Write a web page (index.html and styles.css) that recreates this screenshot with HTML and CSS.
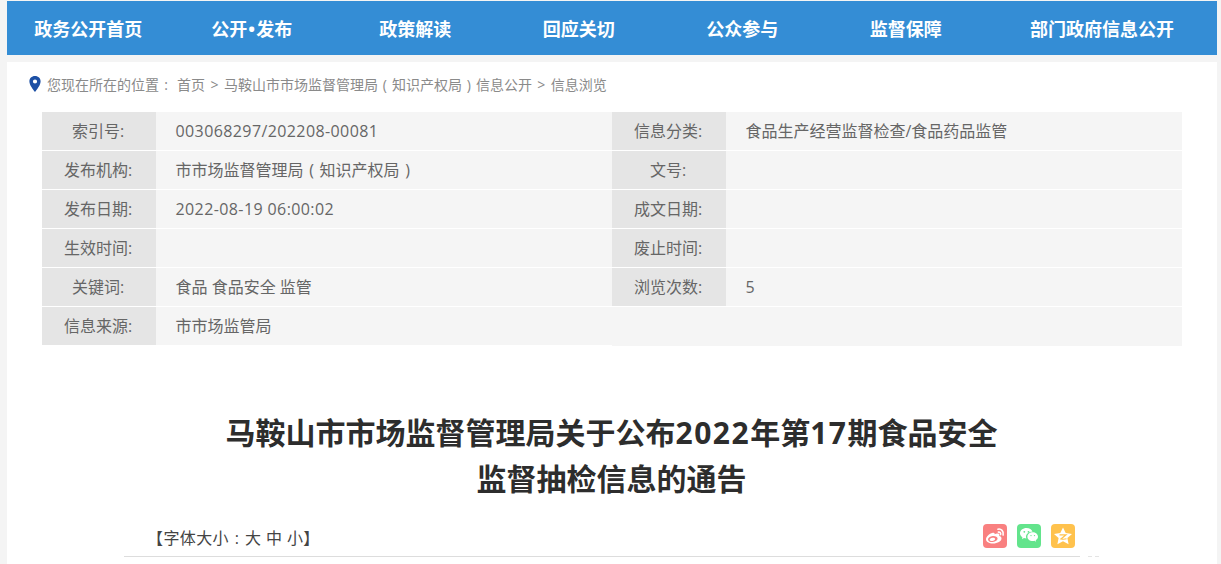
FILE: index.html
```html
<!DOCTYPE html>
<html lang="zh-CN">
<head>
<meta charset="utf-8">
<title>信息浏览</title>
<link rel="stylesheet" href="styles.css">
</head>
<body>
<nav class="nav">
  <a>政务公开首页</a><a>公开<span class="sep">•</span>发布</a><a>政策解读</a><a>回应关切</a><a>公众参与</a><a>监督保障</a><a>部门政府信息公开</a>
</nav>
<main class="page">
  <div class="crumbs">
    <svg class="pin" viewBox="0 0 12 16" width="12" height="16"><path fill="#1d50a5" fill-rule="evenodd" d="M6 0C2.700 0 .4 2.400.4 5.400.4 9 4 13 6 16c2-3 5.600-7 5.600-10.600C11.600 2.400 9.300 0 6 0zm0 3.400a2.100 2.100 0 1 1 0 4.200 2.100 2.100 0 0 1 0-4.200z"/></svg>
    <span>您现在所在的位置<span class="fw">:</span></span>
    <span class="path">首页 &gt; 马鞍山市市场监督管理局<span class="fw">(</span>知识产权局<span class="fw">)</span>信息公开 &gt; 信息浏览</span>
  </div>
  <div class="meta">
    <div class="k">索引号:</div><div class="v num">003068297/202208-00081</div>
    <div class="k">信息分类:</div><div class="v">食品生产经营监督检查/食品药品监管</div>
    <div class="k">发布机构:</div><div class="v">市市场监督管理局<span class="fw">(</span>知识产权局<span class="fw">)</span></div>
    <div class="k">文号:</div><div class="v"></div>
    <div class="k">发布日期:</div><div class="v num">2022-08-19 06:00:02</div>
    <div class="k">成文日期:</div><div class="v"></div>
    <div class="k">生效时间:</div><div class="v"></div>
    <div class="k">废止时间:</div><div class="v"></div>
    <div class="k">关键词:</div><div class="v">食品 食品安全 监管</div>
    <div class="k">浏览次数:</div><div class="v">5</div>
    <div class="k">信息来源:</div><div class="v">市市场监管局</div>
    <div class="v tail"></div>
  </div>
  <h1 class="title">马鞍山市市场监督管理局关于公布<span class="digits">2022</span>年第<span class="digits">17</span>期食品安全<br>监督抽检信息的通告</h1>
  <div class="tools">
    <div class="size">【字体大小<span class="fw">:</span>大 中 小】</div>
    <div class="share">
      <span class="ico weibo"><svg viewBox="0 0 24 24" width="24" height="24"><path fill="#fff" fill-rule="evenodd" d="M10.500 8.500C6.500 9.500 3 12.500 3 15.200c0 2.500 3 4.300 7 4.300 4.500 0 8.500-2.400 8.500-5 0-1.300-1-2-2.300-2.400.5-1.400.1-2.400-1.200-2.600-1.100-.2-2.400.1-3.400.7.200-.9-.3-1.500-1.100-1.200zM9.700 12c2.700-.2 4.900.9 4.900 2.600s-2.100 3.200-4.700 3.400c-2.700.2-4.900-.9-4.900-2.600S7.100 12.200 9.700 12zm-.3 1.700c-1.500.1-2.700 1-2.700 2s1.200 1.500 2.700 1.400 2.700-1 2.700-2-1.200-1.500-2.700-1.400z"/><path fill="none" stroke="#fff" stroke-width="1.600" stroke-linecap="round" d="M15 5.200c3-.7 6 2 5.100 5.800M15.400 8.100c1.400-.3 2.700.9 2.200 2.500"/></svg></span>
      <span class="ico wechat"><svg viewBox="0 0 24 24" width="24" height="24"><path fill="#fff" d="M9.500 4C5.900 4 3 6.400 3 9.300c0 1.700 1 3.100 2.500 4.100L5 15.200l2-1.100c.7.200 1.500.300 2.300.300-.2-.6-.3-1.100-.3-1.700 0-2.800 2.700-5 6-5h.5C14.900 5.700 12.400 4 9.500 4z"/><path fill="#fff" d="M21 12.700c0-2.400-2.400-4.400-5.300-4.400s-5.300 2-5.300 4.400 2.400 4.400 5.300 4.400c.6 0 1.200-.1 1.800-.3l1.600.9-.4-1.500c1.400-.8 2.300-2.100 2.300-3.500z"/><circle cx="7.300" cy="7.800" r=".9" fill="#63e48c"/><circle cx="11.500" cy="7.800" r=".9" fill="#63e48c"/><circle cx="14" cy="11.600" r=".7" fill="#63e48c"/><circle cx="17.500" cy="11.600" r=".7" fill="#63e48c"/></svg></span>
      <span class="ico qzone"><svg viewBox="0 0 24 24" width="24" height="24"><path fill="#fff" d="M12 3.500l2.700 5.600 6.300.8-4.600 4.200 1.200 6.100-5.600-3-5.600 3 1.200-6.100L3 9.900l6.300-.8z"/><path fill="none" stroke="#ffc24d" stroke-width="1.200" d="M8.500 10.800h6.500l-5 4.200c2 .4 3.500.4 5.500-.2"/></svg></span>
    </div>
  </div>
  <div class="rule"><span class="line"></span><span class="dot"></span><span class="dot"></span></div>
</main>
</body>
</html>
```
FILE: styles.css
```css
* { box-sizing: border-box; }
html, body { margin: 0; height: 564px; overflow: hidden; }
body {
  padding: 1px 4px 0 7px;
  background: #f4f4f4;
  font-family: "Open Sans", "Noto Sans CJK SC", sans-serif;
  color: #666;
}
.nav {
  display: grid;
  grid-template-columns: repeat(6, 163.5px) 1fr;
  height: 54px;
  background: #348dd5;
  color: #fff;
  font-size: 18px;
  font-weight: 700;
  line-height: 56px;
  text-align: center;
}
.nav a { padding-right: 1px; }
.sep { margin: 0 1px; }
.page {
  height: 502px;
  margin-top: 7px;
  padding: 0 35px;
  background: #fff;
}
.crumbs {
  display: flex;
  align-items: center;
  gap: 6px;
  height: 50px;
  padding-bottom: 6px;
  margin-left: -13px;
  font-size: 14px;
  color: #8a8a8a;
}
.pin { flex: none; }
.path { margin-left: -2px; word-spacing: 1.800px; }
.fw { display: inline-block; width: 1em; text-align: center; }
.meta {
  display: grid;
  grid-template-columns: 114px 456px 114px 456px;
  grid-auto-rows: 38px;
  row-gap: 1px;
  font-size: 16px;
  line-height: 38px;
}
.k { background: #e5e5e5; text-align: center; padding-right: 2px; }
.v { background: #f5f5f5; padding-left: 19.500px; }
.num { letter-spacing: .4px; }
.tail { grid-column: 3 / 5; margin-bottom: -1px; }
.title {
  margin: 65px 0 0;
  padding-right: 1px;
  font-size: 30px;
  font-weight: 700;
  line-height: 46px;
  text-align: center;
  color: #2d2d2d;
}
.digits { letter-spacing: 1.500px; }
.tools {
  display: flex;
  justify-content: space-between;
  align-items: center;
  height: 32px;
  margin: 18px 107px 0 105px;
  font-size: 16px;
  color: #444;
}
.size { padding-top: 2px; letter-spacing: .4px; }
.share { display: flex; gap: 10px; }
.ico { display: block; width: 24px; height: 24px; border-radius: 4px; }
.ico svg { display: block; }
.weibo { background: #f98080; }
.wechat { background: #63e48c; }
.qzone { background: #ffc24d; }
.rule { display: flex; align-items: center; gap: 3px; height: 1px; margin: 4px 0 0 82px; }
.line { width: 956px; height: 1px; background: #ddd; margin-right: 5px; }
.dot { width: 4px; height: 1px; background: #e4e4e4; }
```
